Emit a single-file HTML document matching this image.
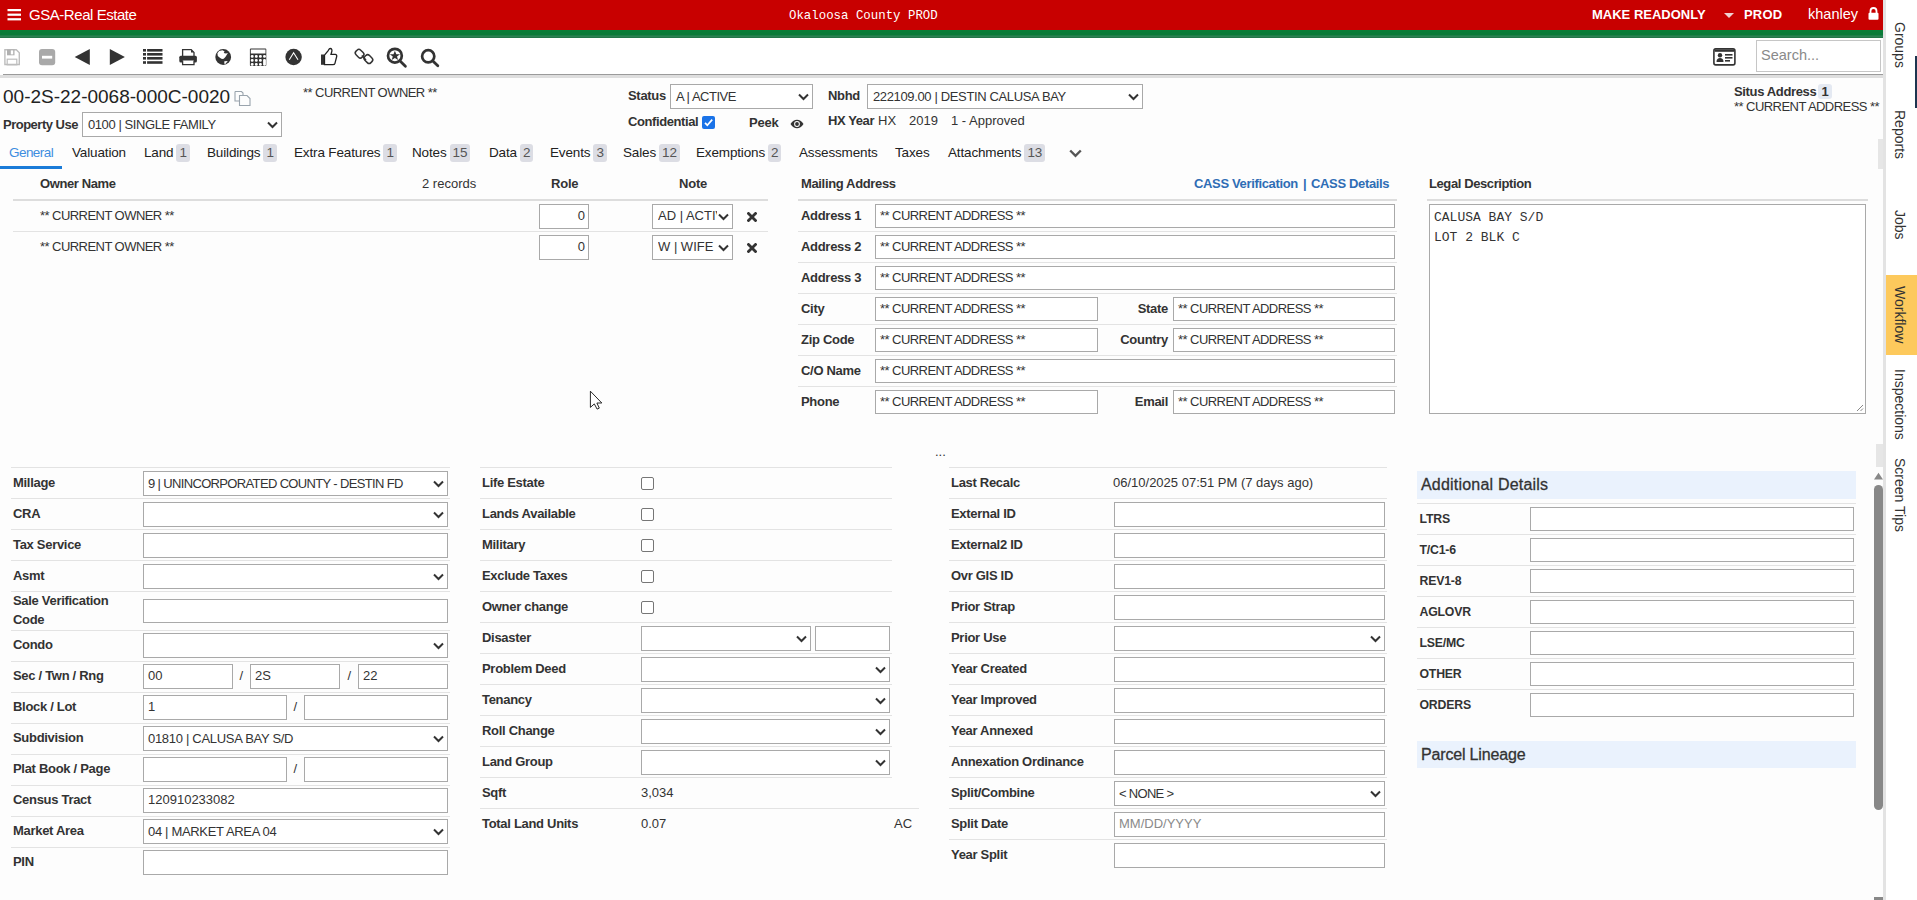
<!DOCTYPE html>
<html><head><meta charset="utf-8"><title>GSA-Real Estate</title>
<style>
*{box-sizing:border-box;margin:0;padding:0}
html,body{width:1917px;height:900px;overflow:hidden;background:#fdfdfd;font-family:"Liberation Sans",sans-serif;color:#333;font-size:13px}
.a{position:absolute;white-space:nowrap}
.b{font-weight:bold}
.lbl{position:absolute;white-space:nowrap;font-weight:bold;font-size:13px;color:#333;line-height:15px;letter-spacing:-0.2px}
.txt{position:absolute;white-space:nowrap;font-size:13px;color:#333;line-height:15px}
.inp{position:absolute;border:1px solid #a9a9a9;background:#fff;height:24px}
.sel{position:absolute;border:1px solid #a9a9a9;background:#fff;height:24px}
.chev{position:absolute;right:3px;top:7.5px}
.v{position:absolute;left:5px;top:4px;font-size:13px;line-height:15px;color:#333;white-space:nowrap}
.sep{position:absolute;height:1px;background:#e2e2e2}
.badge{display:inline-block;background:#dcdde4;border-radius:3px;color:#555;padding:0 3px;margin-left:3px;line-height:17px;padding-bottom:1px;vertical-align:0}
.tab{position:absolute;top:144px;font-size:13.5px;line-height:17px;color:#222;white-space:nowrap;letter-spacing:-0.15px}
.side{position:absolute;left:1884px;width:31px;writing-mode:vertical-rl;white-space:nowrap;font-size:14px;color:#333;display:flex;align-items:center;justify-content:center}
.cb{position:absolute;width:13px;height:13px;border:1px solid #767676;border-radius:2px;background:#fff}
</style></head>
<body>
<!-- header -->
<div class="a" style="left:0;top:0;width:1886px;height:30px;background:#c80000"></div>
<div class="a" style="left:0;top:30px;width:1886px;height:8px;background:linear-gradient(#0a8038 0,#0a7c38 12%,#0a7a38 60%,#2b8152 75%,#2b8152 85%,#1b6e3e 100%)"></div>
<svg class="a" style="left:7px;top:9px" width="15" height="12" viewBox="0 0 15 12"><rect x="0.5" y="0" width="13.5" height="2.2" fill="#fff"/><rect x="0.5" y="4.6" width="13.5" height="2.2" fill="#fff"/><rect x="0.5" y="9.2" width="13.5" height="2.2" fill="#fff"/></svg>
<div class="a" style="left:29px;top:6px;font-size:15px;line-height:17px;color:#fff;letter-spacing:-0.45px">GSA-Real Estate</div>
<div class="a" style="left:789px;top:9px;font-family:'Liberation Mono',monospace;font-size:12.4px;line-height:15px;color:#fff">Okaloosa County PROD</div>
<div class="a b" style="left:1592px;top:7px;font-size:13px;line-height:15px;color:#fff">MAKE READONLY</div>
<svg class="a" style="left:1724px;top:13px" width="10" height="5" viewBox="0 0 10 5"><path d="M0 0H10L5 5Z" fill="#f0d0d0"/></svg>
<div class="a b" style="left:1744px;top:7px;font-size:13px;line-height:15px;color:#fff;letter-spacing:0.2px">PROD</div>
<div class="a" style="left:1808px;top:6px;font-size:14.5px;line-height:17px;color:#fff">khanley</div>
<svg class="a" style="left:1868px;top:7px" width="11" height="13" viewBox="0 0 11 13"><path d="M2.5 6V4A3 3 0 0 1 8.5 4V6" stroke="#fff" stroke-width="1.8" fill="none"/><rect x="0.5" y="5.8" width="10" height="7" rx="1" fill="#fff"/></svg>

<!-- toolbar -->
<div class="a" style="left:0;top:38px;width:1886px;height:36px;background:#fff"></div>
<div class="a" style="left:3px;top:74px;width:1880px;height:1px;background:#9b9b9b"></div>
<div class="a" style="left:0;top:75px;width:1883px;height:3px;background:#dedede"></div>


<!-- toolbar icons -->
<svg class="a" style="left:0;top:38px" width="460" height="36" viewBox="0 38 460 36">
<g fill="none" stroke="#bdbdbd" stroke-width="1.4"><path d="M4.9 49.7H16.3L19.3 52.7V64.5H4.9Z"/></g>
<rect x="7" y="49.5" width="7.5" height="5.8" fill="#b0b0b0"/><rect x="10.8" y="50.4" width="2.4" height="4" fill="#fff"/>
<rect x="7.2" y="59.2" width="9.6" height="5.6" fill="none" stroke="#bdbdbd" stroke-width="1.2"/>
<rect x="39" y="49" width="16.2" height="16.2" rx="3" fill="#a9a9a9"/><rect x="42" y="55.8" width="10.2" height="2.8" fill="#fff"/>
<path d="M89.8 49V65L74.7 57Z" fill="#333"/>
<path d="M109.8 49V65L124.9 57Z" fill="#333"/>
<g fill="#333"><rect x="143" y="49" width="3" height="2.6"/><rect x="147.1" y="49" width="15.4" height="2.6"/>
<rect x="143" y="53" width="3" height="2.6"/><rect x="147.1" y="53" width="15.4" height="2.6"/>
<rect x="143" y="57" width="3" height="2.6"/><rect x="147.1" y="57" width="15.4" height="2.6"/>
<rect x="143" y="61.2" width="3" height="2.6"/><rect x="147.1" y="61.2" width="15.4" height="2.6"/></g>
<path d="M182.6 56V49.6H191.2L194 52.4V56" fill="#fff" stroke="#333" stroke-width="1.3"/>
<path d="M191 49.6V52.6H194" fill="#333"/>
<rect x="179.3" y="55.8" width="17.6" height="6.6" rx="1.5" fill="#333"/>
<path d="M182.6 60.5V64.6H194V60.5" fill="#fff" stroke="#333" stroke-width="1.3"/>
<circle cx="223.2" cy="57" r="7.9" fill="#333"/>
<path d="M217.4 53.2L219.1 50.9L222.5 50.3L224.6 51.6L223.7 53L226 53.5L227.9 53.1L225.4 57L223.7 58.7L222 59L220.2 57.9L217.8 56.1Z" fill="#fff"/><path d="M224.3 61.3L227.8 60.9L225.3 64L224.3 63.8Z" fill="#fff"/>
<rect x="249.9" y="48.6" width="16.4" height="17.4" rx="1" fill="#333"/>
<rect x="250.8" y="49.5" width="14.7" height="4" fill="#fff"/>
<g fill="#fff"><rect x="250.8" y="54.9" width="2.8" height="2.8" rx="1.2"/><rect x="254.9" y="54.9" width="2.8" height="2.8" rx="1.2"/><rect x="259" y="54.9" width="2.8" height="2.8" rx="1.2"/><rect x="263.1" y="54.9" width="2.8" height="2.8" rx="1.2"/>
<rect x="250.8" y="58.9" width="2.8" height="2.8" rx="1.2"/><rect x="254.9" y="58.9" width="2.8" height="2.8" rx="1.2"/><rect x="259" y="58.9" width="2.8" height="2.8" rx="1.2"/><rect x="263.1" y="58.9" width="2.8" height="6.8" rx="1.2"/>
<rect x="250.8" y="62.9" width="2.8" height="2.8" rx="1.2"/><rect x="254.9" y="62.9" width="2.8" height="2.8" rx="1.2"/><rect x="259" y="62.9" width="2.8" height="2.8" rx="1.2"/></g>
<circle cx="293.6" cy="57" r="8.2" fill="#333"/>
<path d="M289.3 59.8L293.6 52.8L298 59.8" fill="none" stroke="#fff" stroke-width="1.1"/>
<path d="M321 54.5H324V64.8H321Z" fill="#333"/>
<path d="M324.5 55.2L328.4 50.3C328.9 49.3 329.2 48.5 330.2 48.5C331.8 48.5 332.2 50 331.8 51.5L331 54.4H335.3C336.4 54.4 337 55.4 336.7 56.5L335 63.2C334.7 64.2 334 64.6 333 64.6H324.5Z" fill="#fff" stroke="#222" stroke-width="1.3"/>
<g fill="none" stroke="#333" stroke-width="1.5"><rect x="356.3" y="49.4" width="6.6" height="8.6" rx="2.6" transform="rotate(-45 359.6 53.7)"/><rect x="365.1" y="54.8" width="6.6" height="8.6" rx="2.6" transform="rotate(-45 368.4 59.1)"/><path d="M361.8 55.6L366 60"/></g>
<circle cx="394.9" cy="55.7" r="6.9" fill="none" stroke="#333" stroke-width="2.7"/>
<path d="M399.8 60.8L405.4 66.2" stroke="#333" stroke-width="2.8" stroke-linecap="round"/>
<path d="M394.9 50.8L396.3 54.2H400L397 56.5L398.1 60.1L394.9 57.9L391.7 60.1L392.8 56.5L389.8 54.2H393.5Z" fill="#333"/>
<circle cx="428.2" cy="56.3" r="6.1" fill="none" stroke="#333" stroke-width="2.7"/>
<path d="M432.6 60.8L437.8 65.8" stroke="#333" stroke-width="2.8" stroke-linecap="round"/>
</svg>
<!-- id card + search -->
<svg class="a" style="left:1713px;top:48px" width="23" height="18" viewBox="0 0 23 18"><rect x="0.9" y="0.9" width="21" height="16" rx="1.8" fill="#fff" stroke="#333" stroke-width="1.6"/><circle cx="7" cy="7.2" r="2.2" fill="#333"/><path d="M3.5 14C3.5 11 5 10 7 10S10.5 11 10.5 14Z" fill="#333"/><rect x="12" y="6" width="7.5" height="1.6" fill="#333"/><rect x="12" y="9" width="7.5" height="1.6" fill="#333"/><rect x="12" y="12" width="5" height="1.6" fill="#333"/><rect x="1.6" y="1.6" width="19.6" height="2.2" fill="#333"/></svg>
<div class="a" style="left:1756px;top:40px;width:125px;height:32px;border:1px solid #c6c6c6;background:#fff"></div>
<div class="a" style="left:1761px;top:47px;font-size:14.5px;line-height:17px;color:#8a8a8a">Search...</div>


<!-- record header -->
<div class="a" style="left:3px;top:86px;font-size:19px;line-height:22px;color:#222">00-2S-22-0068-000C-0020</div>
<svg class="a" style="left:234px;top:90px" width="17" height="16" viewBox="0 0 17 16"><path d="M1 1.5H7.5L9 3V6" fill="none" stroke="#9aa4ad" stroke-width="1.1"/><path d="M1 1.5V11H5" fill="none" stroke="#9aa4ad" stroke-width="1.1"/><path d="M5.5 5.5H13L16 8.5V15.5H5.5Z" fill="none" stroke="#9aa4ad" stroke-width="1.1"/></svg>
<div class="a" style="left:303px;top:85px;font-size:13px;line-height:15px;color:#333;letter-spacing:-0.55px">** CURRENT OWNER **</div>
<div class="lbl" style="left:3px;top:117px;letter-spacing:-0.5px">Property Use</div>
<div class="sel" style="left:82px;top:112px;width:200px;height:25px"><div class="v" style="top:4px;left:5px;letter-spacing:-0.42px">0100 | SINGLE FAMILY</div><svg class="chev" width="11" height="8" viewBox="0 0 11 8"><path d="M1 1.5L5.5 6L10 1.5" fill="none" stroke="#333" stroke-width="2"/></svg></div>

<div class="lbl" style="left:628px;top:88px;letter-spacing:-0.3px">Status</div>
<div class="sel" style="left:670px;top:84px;width:143px;height:25px"><div class="v" style="letter-spacing:-0.48px">A | ACTIVE</div><svg class="chev" width="11" height="8" viewBox="0 0 11 8"><path d="M1 1.5L5.5 6L10 1.5" fill="none" stroke="#333" stroke-width="2"/></svg></div>
<div class="lbl" style="left:628px;top:114px;letter-spacing:-0.4px">Confidential</div>
<div class="a" style="left:702px;top:116px;width:13px;height:13px;background:#1a73e8;border-radius:2px"></div>
<svg class="a" style="left:702px;top:116px" width="13" height="13" viewBox="0 0 13 13"><path d="M3 6.8L5.3 9.2L10.2 3.6" fill="none" stroke="#fff" stroke-width="1.7"/></svg>
<div class="lbl" style="left:749px;top:115px;letter-spacing:-0.2px">Peek</div>
<svg class="a" style="left:790px;top:119px" width="14" height="10" viewBox="0 0 14 10"><path d="M0.5 5C2.5 1.8 4.5 0.8 7 0.8S11.5 1.8 13.5 5C11.5 8.2 9.5 9.2 7 9.2S2.5 8.2 0.5 5Z" fill="#333"/><circle cx="7" cy="5" r="2.9" fill="#fff"/><circle cx="7" cy="5" r="1.9" fill="#333"/></svg>
<div class="lbl" style="left:828px;top:88px;letter-spacing:-0.3px">Nbhd</div>
<div class="sel" style="left:867px;top:84px;width:276px;height:25px"><div class="v" style="letter-spacing:-0.36px">222109.00 | DESTIN CALUSA BAY</div><svg class="chev" width="11" height="8" viewBox="0 0 11 8"><path d="M1 1.5L5.5 6L10 1.5" fill="none" stroke="#333" stroke-width="2"/></svg></div>
<div class="lbl" style="left:828px;top:113px;letter-spacing:-0.4px">HX Year</div>
<div class="txt" style="left:878px;top:113px">HX</div>
<div class="txt" style="left:909px;top:113px">2019</div>
<div class="txt" style="left:951px;top:113px">1 - Approved</div>

<div class="lbl" style="left:1734px;top:84px;letter-spacing:-0.35px">Situs Address</div>
<div class="a" style="left:1818px;top:84px;width:14px;height:15px;background:#e4e9f2;border-radius:3px;font-size:13px;line-height:15px;text-align:center;color:#333;font-weight:bold">1</div>
<div class="txt" style="left:1734px;top:99px;letter-spacing:-0.55px">** CURRENT ADDRESS **</div>

<!-- tabs -->
<div class="tab" style="left:9px;color:#3d8de0;letter-spacing:-0.55px">General</div>
<div class="a" style="left:0;top:166px;width:62px;height:3px;background:#1a7bd8"></div>
<div class="tab" style="left:72px">Valuation</div>
<div class="tab" style="left:144px">Land<span class="badge">1</span></div>
<div class="tab" style="left:207px">Buildings<span class="badge">1</span></div>
<div class="tab" style="left:294px">Extra Features<span class="badge">1</span></div>
<div class="tab" style="left:412px">Notes<span class="badge">15</span></div>
<div class="tab" style="left:489px">Data<span class="badge">2</span></div>
<div class="tab" style="left:550px">Events<span class="badge">3</span></div>
<div class="tab" style="left:623px">Sales<span class="badge">12</span></div>
<div class="tab" style="left:696px">Exemptions<span class="badge">2</span></div>
<div class="tab" style="left:799px">Assessments</div>
<div class="tab" style="left:895px">Taxes</div>
<div class="tab" style="left:948px">Attachments<span class="badge">13</span></div>
<svg class="a" style="left:1069px;top:149px" width="13" height="9" viewBox="0 0 13 9"><path d="M1.2 1.5L6.5 6.8L11.8 1.5" fill="none" stroke="#555" stroke-width="2.4"/></svg>

<div class="lbl" style="left:40px;top:176px;letter-spacing:-0.4px;">Owner Name</div>
<div class="txt" style="left:422px;top:176px;letter-spacing:0px;">2 records</div>
<div class="lbl" style="left:551px;top:176px;letter-spacing:-0.2px;">Role</div>
<div class="lbl" style="left:679px;top:176px;letter-spacing:-0.2px;">Note</div>
<div class="sep" style="left:13px;top:199px;width:755px;height:2px;background:#dddddd"></div>
<div class="sep" style="left:13px;top:231px;width:755px;height:1px;background:#e3e3e3"></div>
<div class="txt" style="left:40px;top:208px;letter-spacing:-0.55px;">** CURRENT OWNER **</div>
<div class="inp" style="left:539px;top:204px;width:50px;height:25px"><div class="v" style="left:auto;right:3px;top:3px;color:#333;letter-spacing:0px">0</div></div>
<div class="sel" style="left:652px;top:204px;width:81px;height:25px"><div class="v" style="top:3px;width:59px;overflow:hidden">AD | ACTIV</div><svg class="chev" style="top:8px" width="11" height="8" viewBox="0 0 11 8"><path d="M1 1.5L5.5 6L10 1.5" fill="none" stroke="#333" stroke-width="2"/></svg></div>
<svg class="a" style="left:747px;top:212px" width="10" height="10" viewBox="0 0 10 10"><path d="M1.5 1.5L8.5 8.5M8.5 1.5L1.5 8.5" stroke="#333" stroke-width="2.8" stroke-linecap="square"/></svg>
<div class="txt" style="left:40px;top:239px;letter-spacing:-0.55px;">** CURRENT OWNER **</div>
<div class="inp" style="left:539px;top:235px;width:50px;height:25px"><div class="v" style="left:auto;right:3px;top:3px;color:#333;letter-spacing:0px">0</div></div>
<div class="sel" style="left:652px;top:235px;width:81px;height:25px"><div class="v" style="top:3px;width:59px;overflow:hidden">W | WIFE</div><svg class="chev" style="top:8px" width="11" height="8" viewBox="0 0 11 8"><path d="M1 1.5L5.5 6L10 1.5" fill="none" stroke="#333" stroke-width="2"/></svg></div>
<svg class="a" style="left:747px;top:243px" width="10" height="10" viewBox="0 0 10 10"><path d="M1.5 1.5L8.5 8.5M8.5 1.5L1.5 8.5" stroke="#333" stroke-width="2.8" stroke-linecap="square"/></svg>
<div class="lbl" style="left:801px;top:176px;letter-spacing:-0.35px;">Mailing Address</div>
<div class="lbl" style="left:1194px;top:176px;color:#2f6db5;letter-spacing:-0.35px">CASS Verification</div>
<div class="lbl" style="left:1303px;top:176px;color:#2f6db5">|</div>
<div class="lbl" style="left:1311px;top:176px;color:#2f6db5;letter-spacing:-0.35px">CASS Details</div>
<div class="sep" style="left:798px;top:199px;width:599px;height:2px;background:#dddddd"></div>
<div class="lbl" style="left:801px;top:208px;letter-spacing:-0.3px;">Address 1</div>
<div class="inp" style="left:875px;top:204px;width:520px;height:24px"><div class="v" style="left:4px;top:3px;color:#333;letter-spacing:-0.55px">** CURRENT ADDRESS **</div></div>
<div class="sep" style="left:798px;top:231px;width:599px;height:1px;background:#e3e3e3"></div>
<div class="lbl" style="left:801px;top:239px;letter-spacing:-0.3px;">Address 2</div>
<div class="inp" style="left:875px;top:235px;width:520px;height:24px"><div class="v" style="left:4px;top:3px;color:#333;letter-spacing:-0.55px">** CURRENT ADDRESS **</div></div>
<div class="sep" style="left:798px;top:262px;width:599px;height:1px;background:#e3e3e3"></div>
<div class="lbl" style="left:801px;top:270px;letter-spacing:-0.3px;">Address 3</div>
<div class="inp" style="left:875px;top:266px;width:520px;height:24px"><div class="v" style="left:4px;top:3px;color:#333;letter-spacing:-0.55px">** CURRENT ADDRESS **</div></div>
<div class="sep" style="left:798px;top:293px;width:599px;height:1px;background:#e3e3e3"></div>
<div class="lbl" style="left:801px;top:301px;letter-spacing:-0.3px;">City</div>
<div class="inp" style="left:875px;top:297px;width:223px;height:24px"><div class="v" style="left:4px;top:3px;color:#333;letter-spacing:-0.55px">** CURRENT ADDRESS **</div></div>
<div class="lbl" style="left:1068px;width:100px;text-align:right;top:301px;letter-spacing:-0.3px">State</div>
<div class="inp" style="left:1173px;top:297px;width:222px;height:24px"><div class="v" style="left:4px;top:3px;color:#333;letter-spacing:-0.55px">** CURRENT ADDRESS **</div></div>
<div class="sep" style="left:798px;top:324px;width:599px;height:1px;background:#e3e3e3"></div>
<div class="lbl" style="left:801px;top:332px;letter-spacing:-0.3px;">Zip Code</div>
<div class="inp" style="left:875px;top:328px;width:223px;height:24px"><div class="v" style="left:4px;top:3px;color:#333;letter-spacing:-0.55px">** CURRENT ADDRESS **</div></div>
<div class="lbl" style="left:1068px;width:100px;text-align:right;top:332px;letter-spacing:-0.3px">Country</div>
<div class="inp" style="left:1173px;top:328px;width:222px;height:24px"><div class="v" style="left:4px;top:3px;color:#333;letter-spacing:-0.55px">** CURRENT ADDRESS **</div></div>
<div class="sep" style="left:798px;top:355px;width:599px;height:1px;background:#e3e3e3"></div>
<div class="lbl" style="left:801px;top:363px;letter-spacing:-0.3px;">C/O Name</div>
<div class="inp" style="left:875px;top:359px;width:520px;height:24px"><div class="v" style="left:4px;top:3px;color:#333;letter-spacing:-0.55px">** CURRENT ADDRESS **</div></div>
<div class="sep" style="left:798px;top:386px;width:599px;height:1px;background:#e3e3e3"></div>
<div class="lbl" style="left:801px;top:394px;letter-spacing:-0.3px;">Phone</div>
<div class="inp" style="left:875px;top:390px;width:223px;height:24px"><div class="v" style="left:4px;top:3px;color:#333;letter-spacing:-0.55px">** CURRENT ADDRESS **</div></div>
<div class="lbl" style="left:1068px;width:100px;text-align:right;top:394px;letter-spacing:-0.3px">Email</div>
<div class="inp" style="left:1173px;top:390px;width:222px;height:24px"><div class="v" style="left:4px;top:3px;color:#333;letter-spacing:-0.55px">** CURRENT ADDRESS **</div></div>
<div class="lbl" style="left:1429px;top:176px;letter-spacing:-0.4px;">Legal Description</div>
<div class="sep" style="left:1427px;top:199px;width:441px;height:2px;background:#dddddd"></div>
<div class="a" style="left:1429px;top:204px;width:437px;height:210px;border:1px solid #a9a9a9;background:#fff"></div>
<div class="a" style="left:1434px;top:208px;font-family:'Liberation Mono',monospace;font-size:13px;line-height:20px;color:#333;white-space:pre">CALUSA BAY S/D
LOT 2 BLK C</div>
<svg class="a" style="left:1854px;top:402px" width="10" height="10" viewBox="0 0 10 10"><path d="M9 3L3 9M9 6.5L6.5 9" stroke="#888" stroke-width="1"/></svg>
<svg class="a" style="left:589px;top:390px;z-index:5" width="15" height="20" viewBox="0 0 15 20"><path d="M1.4 1.2V17.4L5.3 13.9L8.1 19.1L10.3 18.1L7.9 13H12.8Z" fill="#fff" stroke="#111" stroke-width="0.9" stroke-linejoin="round"/></svg>
<div class="a" style="left:935px;top:444px;font-size:13px;line-height:15px;color:#333">...</div>
<div class="sep" style="left:11px;top:467px;width:439px;height:1px;background:#e3e3e3"></div>
<div class="lbl" style="left:13px;top:475px;letter-spacing:-0.3px;">Millage</div>
<div class="sel" style="left:143px;top:471px;width:305px;height:25px"><div class="v" style="left:4px;top:4px;letter-spacing:0px"><span style="letter-spacing:-0.65px">9 | UNINCORPORATED COUNTY - DESTIN FD</span></div><svg class="chev" style="top:8px" width="11" height="8" viewBox="0 0 11 8"><path d="M1 1.5L5.5 6L10 1.5" fill="none" stroke="#333" stroke-width="2"/></svg></div>
<div class="sep" style="left:11px;top:498px;width:439px;height:1px;background:#e3e3e3"></div>
<div class="lbl" style="left:13px;top:506px;letter-spacing:-0.3px;">CRA</div>
<div class="sel" style="left:143px;top:502px;width:305px;height:25px"><svg class="chev" style="top:8px" width="11" height="8" viewBox="0 0 11 8"><path d="M1 1.5L5.5 6L10 1.5" fill="none" stroke="#333" stroke-width="2"/></svg></div>
<div class="sep" style="left:11px;top:529px;width:439px;height:1px;background:#e3e3e3"></div>
<div class="lbl" style="left:13px;top:537px;letter-spacing:-0.3px;">Tax Service</div>
<div class="inp" style="left:143px;top:533px;width:305px;height:25px"></div>
<div class="sep" style="left:11px;top:560px;width:439px;height:1px;background:#e3e3e3"></div>
<div class="lbl" style="left:13px;top:568px;letter-spacing:-0.3px;">Asmt</div>
<div class="sel" style="left:143px;top:564px;width:305px;height:25px"><svg class="chev" style="top:8px" width="11" height="8" viewBox="0 0 11 8"><path d="M1 1.5L5.5 6L10 1.5" fill="none" stroke="#333" stroke-width="2"/></svg></div>
<div class="sep" style="left:11px;top:591px;width:439px;height:1px;background:#e3e3e3"></div>
<div class="lbl" style="left:13px;top:591px;line-height:19px;letter-spacing:-0.3px">Sale Verification<br>Code</div>
<div class="inp" style="left:143px;top:599px;width:305px;height:24px"></div>
<div class="sep" style="left:11px;top:630px;width:439px;height:1px;background:#e3e3e3"></div>
<div class="lbl" style="left:13px;top:637px;letter-spacing:-0.3px;">Condo</div>
<div class="sel" style="left:143px;top:633px;width:305px;height:25px"><svg class="chev" style="top:8px" width="11" height="8" viewBox="0 0 11 8"><path d="M1 1.5L5.5 6L10 1.5" fill="none" stroke="#333" stroke-width="2"/></svg></div>
<div class="sep" style="left:11px;top:661px;width:439px;height:1px;background:#e3e3e3"></div>
<div class="lbl" style="left:13px;top:668px;letter-spacing:-0.3px;">Sec / Twn / Rng</div>
<div class="inp" style="left:143px;top:664px;width:90px;height:25px"><div class="v" style="left:4px;top:3px;color:#333;letter-spacing:0px">00</div></div>
<div class="txt" style="left:239.5px;top:668px;letter-spacing:0px;">/</div>
<div class="inp" style="left:250px;top:664px;width:90px;height:25px"><div class="v" style="left:4px;top:3px;color:#333;letter-spacing:0px">2S</div></div>
<div class="txt" style="left:347.5px;top:668px;letter-spacing:0px;">/</div>
<div class="inp" style="left:358px;top:664px;width:90px;height:25px"><div class="v" style="left:4px;top:3px;color:#333;letter-spacing:0px">22</div></div>
<div class="sep" style="left:11px;top:692px;width:439px;height:1px;background:#e3e3e3"></div>
<div class="lbl" style="left:13px;top:699px;letter-spacing:-0.3px;">Block / Lot</div>
<div class="inp" style="left:143px;top:695px;width:144px;height:25px"><div class="v" style="left:4px;top:3px;color:#333;letter-spacing:0px">1</div></div>
<div class="txt" style="left:293.5px;top:699px;letter-spacing:0px;">/</div>
<div class="inp" style="left:304px;top:695px;width:144px;height:25px"></div>
<div class="sep" style="left:11px;top:723px;width:439px;height:1px;background:#e3e3e3"></div>
<div class="lbl" style="left:13px;top:730px;letter-spacing:-0.3px;">Subdivision</div>
<div class="sel" style="left:143px;top:726px;width:305px;height:25px"><div class="v" style="left:4px;top:4px;letter-spacing:0px"><span style="letter-spacing:-0.3px">01810 | CALUSA BAY S/D</span></div><svg class="chev" style="top:8px" width="11" height="8" viewBox="0 0 11 8"><path d="M1 1.5L5.5 6L10 1.5" fill="none" stroke="#333" stroke-width="2"/></svg></div>
<div class="sep" style="left:11px;top:754px;width:439px;height:1px;background:#e3e3e3"></div>
<div class="lbl" style="left:13px;top:761px;letter-spacing:-0.3px;">Plat Book / Page</div>
<div class="inp" style="left:143px;top:757px;width:144px;height:25px"></div>
<div class="txt" style="left:293.5px;top:761px;letter-spacing:0px;">/</div>
<div class="inp" style="left:304px;top:757px;width:144px;height:25px"></div>
<div class="sep" style="left:11px;top:785px;width:439px;height:1px;background:#e3e3e3"></div>
<div class="lbl" style="left:13px;top:792px;letter-spacing:-0.3px;">Census Tract</div>
<div class="inp" style="left:143px;top:788px;width:305px;height:25px"><div class="v" style="left:4px;top:3px;color:#333;letter-spacing:0px">120910233082</div></div>
<div class="sep" style="left:11px;top:816px;width:439px;height:1px;background:#e3e3e3"></div>
<div class="lbl" style="left:13px;top:823px;letter-spacing:-0.3px;">Market Area</div>
<div class="sel" style="left:143px;top:819px;width:305px;height:25px"><div class="v" style="left:4px;top:4px;letter-spacing:0px"><span style="letter-spacing:-0.33px">04 | MARKET AREA 04</span></div><svg class="chev" style="top:8px" width="11" height="8" viewBox="0 0 11 8"><path d="M1 1.5L5.5 6L10 1.5" fill="none" stroke="#333" stroke-width="2"/></svg></div>
<div class="sep" style="left:11px;top:847px;width:439px;height:1px;background:#e3e3e3"></div>
<div class="lbl" style="left:13px;top:854px;letter-spacing:-0.3px;">PIN</div>
<div class="inp" style="left:143px;top:850px;width:305px;height:25px"></div>
<div class="sep" style="left:480px;top:467px;width:412px;height:1px;background:#e3e3e3"></div>
<div class="lbl" style="left:482px;top:475px;letter-spacing:-0.3px;">Life Estate</div>
<div class="cb" style="left:641px;top:477px"></div>
<div class="sep" style="left:480px;top:498px;width:412px;height:1px;background:#e3e3e3"></div>
<div class="lbl" style="left:482px;top:506px;letter-spacing:-0.3px;">Lands Available</div>
<div class="cb" style="left:641px;top:508px"></div>
<div class="sep" style="left:480px;top:529px;width:412px;height:1px;background:#e3e3e3"></div>
<div class="lbl" style="left:482px;top:537px;letter-spacing:-0.3px;">Military</div>
<div class="cb" style="left:641px;top:539px"></div>
<div class="sep" style="left:480px;top:560px;width:412px;height:1px;background:#e3e3e3"></div>
<div class="lbl" style="left:482px;top:568px;letter-spacing:-0.3px;">Exclude Taxes</div>
<div class="cb" style="left:641px;top:570px"></div>
<div class="sep" style="left:480px;top:591px;width:412px;height:1px;background:#e3e3e3"></div>
<div class="lbl" style="left:482px;top:599px;letter-spacing:-0.3px;">Owner change</div>
<div class="cb" style="left:641px;top:601px"></div>
<div class="sep" style="left:480px;top:622px;width:412px;height:1px;background:#e3e3e3"></div>
<div class="lbl" style="left:482px;top:630px;letter-spacing:-0.3px;">Disaster</div>
<div class="sel" style="left:641px;top:626px;width:170px;height:25px"><svg class="chev" style="top:8px" width="11" height="8" viewBox="0 0 11 8"><path d="M1 1.5L5.5 6L10 1.5" fill="none" stroke="#333" stroke-width="2"/></svg></div>
<div class="inp" style="left:815px;top:626px;width:75px;height:25px"></div>
<div class="sep" style="left:480px;top:653px;width:412px;height:1px;background:#e3e3e3"></div>
<div class="lbl" style="left:482px;top:661px;letter-spacing:-0.3px;">Problem Deed</div>
<div class="sel" style="left:641px;top:657px;width:249px;height:25px"><svg class="chev" style="top:8px" width="11" height="8" viewBox="0 0 11 8"><path d="M1 1.5L5.5 6L10 1.5" fill="none" stroke="#333" stroke-width="2"/></svg></div>
<div class="sep" style="left:480px;top:684px;width:412px;height:1px;background:#e3e3e3"></div>
<div class="lbl" style="left:482px;top:692px;letter-spacing:-0.3px;">Tenancy</div>
<div class="sel" style="left:641px;top:688px;width:249px;height:25px"><svg class="chev" style="top:8px" width="11" height="8" viewBox="0 0 11 8"><path d="M1 1.5L5.5 6L10 1.5" fill="none" stroke="#333" stroke-width="2"/></svg></div>
<div class="sep" style="left:480px;top:715px;width:412px;height:1px;background:#e3e3e3"></div>
<div class="lbl" style="left:482px;top:723px;letter-spacing:-0.3px;">Roll Change</div>
<div class="sel" style="left:641px;top:719px;width:249px;height:25px"><svg class="chev" style="top:8px" width="11" height="8" viewBox="0 0 11 8"><path d="M1 1.5L5.5 6L10 1.5" fill="none" stroke="#333" stroke-width="2"/></svg></div>
<div class="sep" style="left:480px;top:746px;width:412px;height:1px;background:#e3e3e3"></div>
<div class="lbl" style="left:482px;top:754px;letter-spacing:-0.3px;">Land Group</div>
<div class="sel" style="left:641px;top:750px;width:249px;height:25px"><svg class="chev" style="top:8px" width="11" height="8" viewBox="0 0 11 8"><path d="M1 1.5L5.5 6L10 1.5" fill="none" stroke="#333" stroke-width="2"/></svg></div>
<div class="sep" style="left:480px;top:777px;width:412px;height:1px;background:#e3e3e3"></div>
<div class="lbl" style="left:482px;top:785px;letter-spacing:-0.3px;">Sqft</div>
<div class="txt" style="left:641px;top:785px;letter-spacing:0px;">3,034</div>
<div class="sep" style="left:480px;top:808px;width:439px;height:1px;background:#e3e3e3"></div>
<div class="lbl" style="left:482px;top:816px;letter-spacing:-0.3px;">Total Land Units</div>
<div class="txt" style="left:641px;top:816px;letter-spacing:0px;">0.07</div>
<div class="txt" style="left:894px;top:816px;letter-spacing:0px;">AC</div>
<div class="sep" style="left:949px;top:467px;width:438px;height:1px;background:#e3e3e3"></div>
<div class="lbl" style="left:951px;top:475px;letter-spacing:-0.3px;">Last Recalc</div>
<div class="txt" style="left:1113px;top:475px;letter-spacing:0px;">06/10/2025 07:51 PM (7 days ago)</div>
<div class="sep" style="left:949px;top:498px;width:438px;height:1px;background:#e3e3e3"></div>
<div class="lbl" style="left:951px;top:506px;letter-spacing:-0.3px;">External ID</div>
<div class="inp" style="left:1114px;top:502px;width:271px;height:25px"></div>
<div class="sep" style="left:949px;top:529px;width:438px;height:1px;background:#e3e3e3"></div>
<div class="lbl" style="left:951px;top:537px;letter-spacing:-0.3px;">External2 ID</div>
<div class="inp" style="left:1114px;top:533px;width:271px;height:25px"></div>
<div class="sep" style="left:949px;top:560px;width:438px;height:1px;background:#e3e3e3"></div>
<div class="lbl" style="left:951px;top:568px;letter-spacing:-0.3px;">Ovr GIS ID</div>
<div class="inp" style="left:1114px;top:564px;width:271px;height:25px"></div>
<div class="sep" style="left:949px;top:591px;width:438px;height:1px;background:#e3e3e3"></div>
<div class="lbl" style="left:951px;top:599px;letter-spacing:-0.3px;">Prior Strap</div>
<div class="inp" style="left:1114px;top:595px;width:271px;height:25px"></div>
<div class="sep" style="left:949px;top:622px;width:438px;height:1px;background:#e3e3e3"></div>
<div class="lbl" style="left:951px;top:630px;letter-spacing:-0.3px;">Prior Use</div>
<div class="sel" style="left:1114px;top:626px;width:271px;height:25px"><svg class="chev" style="top:8px" width="11" height="8" viewBox="0 0 11 8"><path d="M1 1.5L5.5 6L10 1.5" fill="none" stroke="#333" stroke-width="2"/></svg></div>
<div class="sep" style="left:949px;top:653px;width:438px;height:1px;background:#e3e3e3"></div>
<div class="lbl" style="left:951px;top:661px;letter-spacing:-0.3px;">Year Created</div>
<div class="inp" style="left:1114px;top:657px;width:271px;height:25px"></div>
<div class="sep" style="left:949px;top:684px;width:438px;height:1px;background:#e3e3e3"></div>
<div class="lbl" style="left:951px;top:692px;letter-spacing:-0.3px;">Year Improved</div>
<div class="inp" style="left:1114px;top:688px;width:271px;height:25px"></div>
<div class="sep" style="left:949px;top:715px;width:438px;height:1px;background:#e3e3e3"></div>
<div class="lbl" style="left:951px;top:723px;letter-spacing:-0.3px;">Year Annexed</div>
<div class="inp" style="left:1114px;top:719px;width:271px;height:25px"></div>
<div class="sep" style="left:949px;top:746px;width:438px;height:1px;background:#e3e3e3"></div>
<div class="lbl" style="left:951px;top:754px;letter-spacing:-0.3px;">Annexation Ordinance</div>
<div class="inp" style="left:1114px;top:750px;width:271px;height:25px"></div>
<div class="sep" style="left:949px;top:777px;width:438px;height:1px;background:#e3e3e3"></div>
<div class="lbl" style="left:951px;top:785px;letter-spacing:-0.3px;">Split/Combine</div>
<div class="sel" style="left:1114px;top:781px;width:271px;height:25px"><div class="v" style="left:4px;top:4px;letter-spacing:-0.7px">&lt; NONE &gt;</div><svg class="chev" style="top:8px" width="11" height="8" viewBox="0 0 11 8"><path d="M1 1.5L5.5 6L10 1.5" fill="none" stroke="#333" stroke-width="2"/></svg></div>
<div class="sep" style="left:949px;top:808px;width:438px;height:1px;background:#e3e3e3"></div>
<div class="lbl" style="left:951px;top:816px;letter-spacing:-0.3px;">Split Date</div>
<div class="inp" style="left:1114px;top:812px;width:271px;height:25px"><div class="v" style="left:4px;top:3px;color:#8a8a8a;letter-spacing:0px">MM/DD/YYYY</div></div>
<div class="sep" style="left:949px;top:839px;width:438px;height:1px;background:#e3e3e3"></div>
<div class="lbl" style="left:951px;top:847px;letter-spacing:-0.3px;">Year Split</div>
<div class="inp" style="left:1114px;top:843px;width:271px;height:25px"></div>
<div class="a" style="left:1417px;top:471px;width:439px;height:28px;background:#eaf2fd"></div>
<div class="a" style="left:1421px;top:476px;font-size:16px;line-height:18px;color:#333;letter-spacing:0.2px;-webkit-text-stroke:0.3px #333">Additional Details</div>
<div class="sep" style="left:1417px;top:503px;width:439px;height:1px;background:#e3e3e3"></div>
<div class="lbl" style="left:1419.5px;top:512px;letter-spacing:-0.2px;font-size:12.3px">LTRS</div>
<div class="inp" style="left:1530px;top:507px;width:324px;height:24px"></div>
<div class="sep" style="left:1417px;top:534px;width:439px;height:1px;background:#e3e3e3"></div>
<div class="lbl" style="left:1419.5px;top:543px;letter-spacing:-0.2px;font-size:12.3px">T/C1-6</div>
<div class="inp" style="left:1530px;top:538px;width:324px;height:24px"></div>
<div class="sep" style="left:1417px;top:565px;width:439px;height:1px;background:#e3e3e3"></div>
<div class="lbl" style="left:1419.5px;top:574px;letter-spacing:-0.2px;font-size:12.3px">REV1-8</div>
<div class="inp" style="left:1530px;top:569px;width:324px;height:24px"></div>
<div class="sep" style="left:1417px;top:596px;width:439px;height:1px;background:#e3e3e3"></div>
<div class="lbl" style="left:1419.5px;top:605px;letter-spacing:-0.2px;font-size:12.3px">AGLOVR</div>
<div class="inp" style="left:1530px;top:600px;width:324px;height:24px"></div>
<div class="sep" style="left:1417px;top:627px;width:439px;height:1px;background:#e3e3e3"></div>
<div class="lbl" style="left:1419.5px;top:636px;letter-spacing:-0.2px;font-size:12.3px">LSE/MC</div>
<div class="inp" style="left:1530px;top:631px;width:324px;height:24px"></div>
<div class="sep" style="left:1417px;top:658px;width:439px;height:1px;background:#e3e3e3"></div>
<div class="lbl" style="left:1419.5px;top:667px;letter-spacing:-0.2px;font-size:12.3px">OTHER</div>
<div class="inp" style="left:1530px;top:662px;width:324px;height:24px"></div>
<div class="sep" style="left:1417px;top:689px;width:439px;height:1px;background:#e3e3e3"></div>
<div class="lbl" style="left:1419.5px;top:698px;letter-spacing:-0.2px;font-size:12.3px">ORDERS</div>
<div class="inp" style="left:1530px;top:693px;width:324px;height:24px"></div>
<div class="a" style="left:1417px;top:741px;width:439px;height:27px;background:#eaf2fd"></div>
<div class="a" style="left:1421px;top:746px;font-size:16px;line-height:18px;color:#333;letter-spacing:-0.17px;-webkit-text-stroke:0.3px #333">Parcel Lineage</div>
<div class="a" style="left:1878px;top:139px;width:5px;height:30px;background:#e6e6e6"></div>
<div class="a" style="left:1876px;top:444px;width:7px;height:23px;background:#e6e6e6"></div>
<svg class="a" style="left:1874px;top:472px" width="9" height="8" viewBox="0 0 9 8"><path d="M0 7.5L4.5 0.8L9 7.5Z" fill="#888"/></svg>
<div class="a" style="left:1874px;top:485px;width:9px;height:325px;background:#888;border-radius:4.5px"></div>
<div class="a" style="left:1874px;top:897px;width:9px;height:3px;background:#888"></div>
<!-- sidebar -->
<div class="a" style="left:1883px;top:0;width:3px;height:900px;background:#e3e3e3"></div>
<div class="a" style="left:1886px;top:0;width:31px;height:900px;background:#fff"></div>
<div class="a" style="left:1915px;top:56px;width:2px;height:52px;background:#1d3550"></div>
<div class="a" style="left:1886px;top:275px;width:31px;height:80px;background:#fdc95c"></div>
<div class="side" style="top:22px;height:45px">Groups</div>
<div class="side" style="top:111px;height:48px">Reports</div>
<div class="side" style="top:209px;height:31px">Jobs</div>
<div class="side" style="top:286px;height:58px">Workflow</div>
<div class="side" style="top:368px;height:73px">Inspections</div>
<div class="side" style="top:458px;height:73px">Screen Tips</div>

</body></html>
